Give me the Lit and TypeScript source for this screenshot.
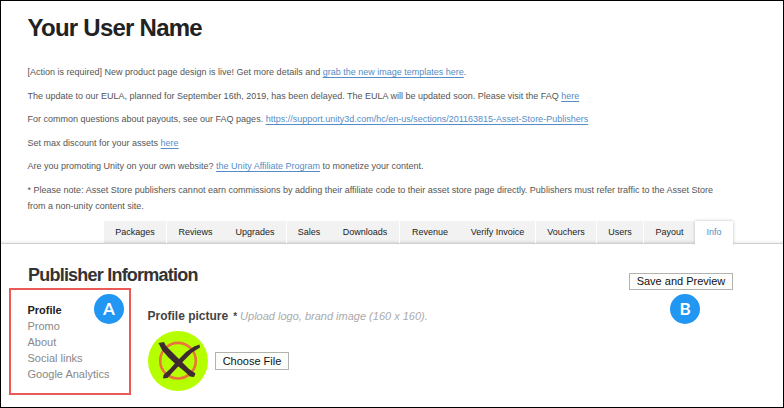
import { LitElement, html, css } from "lit";
import { customElement } from "lit/decorators.js";
import { styleMap } from "lit/directives/style-map.js";
import { classMap } from "lit/directives/class-map.js";

const TABS: { label: string; width: number; divided?: boolean; active?: boolean }[] = [
  { label: "Packages", width: 63, divided: true },
  { label: "Reviews", width: 57 },
  { label: "Upgrades", width: 63, divided: true },
  { label: "Sales", width: 44 },
  { label: "Downloads", width: 69, divided: true },
  { label: "Revenue", width: 60 },
  { label: "Verify Invoice", width: 76, divided: true },
  { label: "Vouchers", width: 61, divided: true },
  { label: "Users", width: 47, divided: true },
  { label: "Payout", width: 51 },
  { label: "Info", width: 38, active: true },
];

const SECTIONS = ["Profile", "Promo", "About", "Social links", "Google Analytics"];

@customElement("app-root")
export class AppRoot extends LitElement {
  static styles = css`
    :host {
      display: block;
      box-sizing: border-box;
      width: 784px;
      height: 408px;
      border: 1px solid #000;
      background: #fff;
      overflow: hidden;
      font-family: "Liberation Sans", Arial, sans-serif;
      color: #555;
    }
    h1, h2, p { margin: 0; white-space: nowrap; }
    header { height: 219px; padding: 12px 0 0 26.5px; box-sizing: border-box; }
    h1 { font-size: 24px; line-height: 30px; letter-spacing: -0.75px; color: #222; }
    .notices {
      padding-top: 21px;
      display: flex;
      flex-direction: column;
      gap: 7.6px;
      font-size: 9px;
      line-height: 16px;
    }
    a { color: #558dc8; text-decoration: underline; text-underline-offset: 2px; text-decoration-skip-ink: none; }
    .n1 { letter-spacing: 0; }
    .n6 { letter-spacing: 0.007px; }
    .tabs {
      display: flex;
      height: 24px;
      padding: 0 50px 0 103px;
      border-bottom: 1px solid #d0d0d0;
      box-sizing: border-box;
      background: linear-gradient(#fff 20px, #f0f0f0 23px);
    }
    .tab {
      box-sizing: border-box;
      margin-top: 1px;
      height: 22px;
      text-align: center;
      background: linear-gradient(#f2f2f2 19px, #dcdcdc 22px);
      font-size: 9px;
      line-height: 22px;
      white-space: nowrap;
      color: #222;
    }
    .divided { border-right: 1px solid #fff; }
    .active {
      height: 24px;
      background: #fff;
      color: #558dc8;
      box-shadow: 0 0 3px #bbb;
      clip-path: inset(-3px -3px 0 -3px);
    }
    .top { display: flex; justify-content: space-between; height: 44px; padding: 20px 50px 0 27px; box-sizing: border-box; }
    h2 { font-size: 18px; line-height: 23px; letter-spacing: -0.78px; color: #333; }
    button {
      box-sizing: border-box;
      padding: 0;
      border: 1px solid #b2b2ae;
      border-radius: 0;
      background: #fdfdfb;
      color: #111;
      font: 11px/13px "Liberation Sans", Arial, sans-serif;
      white-space: nowrap;
    }
    .save { width: 104px; height: 17px; margin-top: 9px; line-height: 12px; padding-bottom: 2px; }
    .choose { width: 74px; height: 18px; margin-left: 7px; }
    .body { display: flex; }
    nav {
      position: relative;
      box-sizing: border-box;
      width: 122px;
      height: 107px;
      margin-left: 8px;
      padding: 12px 0 0 16.5px;
      border: 2px solid #ea5a57;
      font-size: 11px;
      line-height: 16px;
      color: #888;
    }
    .current { font-weight: bold; color: #222; }
    .badge {
      width: 30px;
      height: 30px;
      border-radius: 50%;
      background: #2196f3;
      color: #fff;
      font: 700 17px/30px Lato, sans-serif;
      text-align: center;
    }
    .badge-a { position: absolute; left: 83px; top: 4px; }
    .badge-b { margin: 6px 0 0 auto; }
    .profile { padding: 20px 0 0 16.5px; width: 300px; }
    .caption { height: 16px; font-size: 12px; line-height: 16px; color: #444; white-space: nowrap; display: flex; }
    .star { margin-left: 5px; font-size: 10px; line-height: 18px; }
    .hint { font-size: 11px; font-style: italic; color: #aaa; margin-left: 3px; }
    .picture { display: flex; align-items: center; padding: 7px 0 0 0.5px; }
    svg { display: block; }
    .right { flex: 1; padding-right: 83px; }
  `;

  render() {
    return html`
      <header>
        <h1>Your User Name</h1>
        <div class="notices">
          <p class="n1">[Action is required] New product page design is live! Get more details and <a>grab the new image templates here</a>.</p>
          <p>The update to our EULA, planned for September 16th, 2019, has been delayed. The EULA will be updated soon. Please visit the FAQ <a>here</a></p>
          <p>For common questions about payouts, see our FAQ pages. <a>https://support.unity3d.com/hc/en-us/sections/201163815-Asset-Store-Publishers</a></p>
          <p>Set max discount for your assets <a>here</a></p>
          <p>Are you promoting Unity on your own website? <a>the Unity Affiliate Program</a> to monetize your content.</p>
          <p class="n6">* Please note: Asset Store publishers cannot earn commissions by adding their affiliate code to their asset store page directly. Publishers must refer traffic to the Asset Store<br />from a non-unity content site.</p>
        </div>
      </header>
      <div class="tabs">
        ${TABS.map(
          (t) => html`<div class=${classMap({ tab: true, divided: !!t.divided, active: !!t.active })} style=${styleMap({ width: `${t.width}px` })}>${t.label}</div>`
        )}
      </div>
      <div class="top">
        <h2>Publisher Information</h2>
        <button class="save">Save and Preview</button>
      </div>
      <div class="body">
        <nav>
          ${SECTIONS.map((s, i) => html`<div class=${classMap({ current: i === 0 })}>${s}</div>`)}
          <div class="badge badge-a">A</div>
        </nav>
        <div class="profile">
          <div class="caption"><b>Profile picture</b><b class="star">*</b><span class="hint">Upload logo, brand image (160 x 160).</span></div>
          <div class="picture">
            <svg width="60" height="60" viewBox="0 0 60 60">
              <circle cx="30" cy="30" r="30" fill="#b6ff00" />
              <circle cx="30" cy="29.7" r="17.8" fill="none" stroke="#e8743c" stroke-width="2.6" />
              <path d="M10.500 12L16 11L18 15L24 21L33 30L41 38L47.500 42.500L46 46L42 45.500L36 40L28 33.500L20 26L14 19Z" fill="#3d2b30" />
              <path d="M46 15.500L51.500 13.500L52 16.500L44 21.500L34 31.500L24 42L19.500 47L15 47.500L15.500 44L22 38L29 30L38 21Z" fill="#3d2b30" />
            </svg>
            <button class="choose">Choose File</button>
          </div>
        </div>
        <div class="right"><div class="badge badge-b">B</div></div>
      </div>
    `;
  }
}
